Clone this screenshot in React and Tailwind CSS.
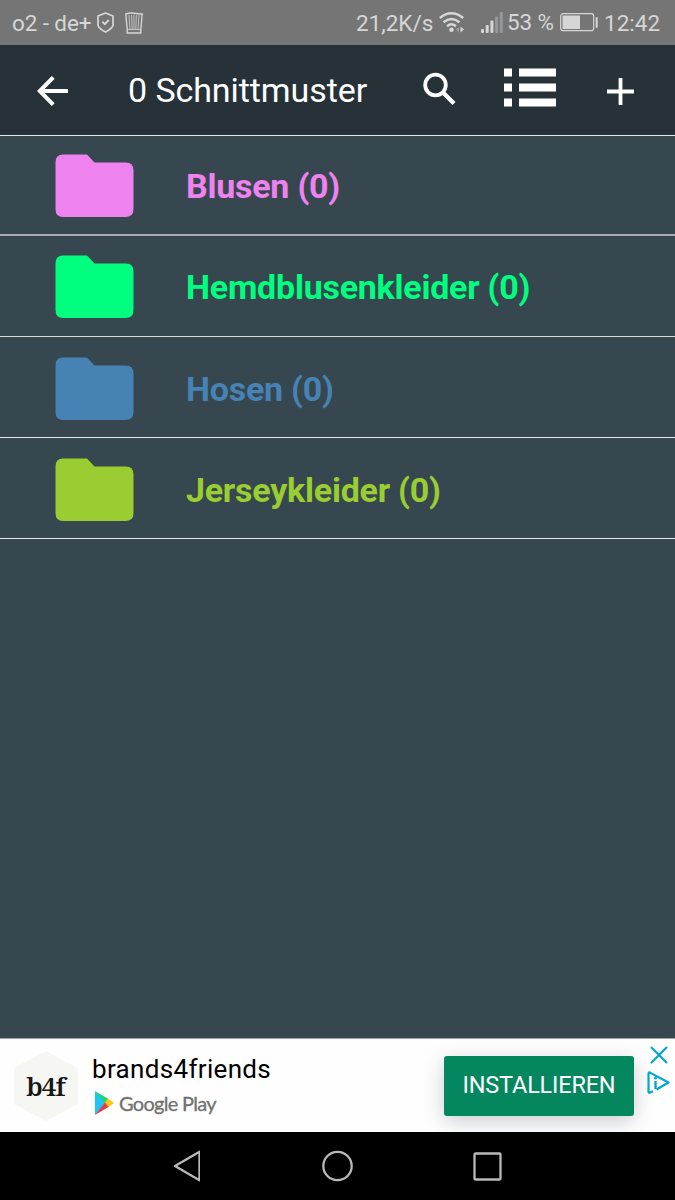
import React from "react";

const folders = [
  { name: "Blusen", count: 0, text: "text-[#ee82ee]", row: "h-[100px] border-b-2 border-[#a9adb5] pt-[2px]" },
  { name: "Hemdblusenkleider", count: 0, text: "text-[#00ff7f]", row: "h-[101px] border-b border-[#d8d8d8] pt-[2px]" },
  { name: "Hosen", count: 0, text: "text-[#4682b4]", row: "h-[101px] border-b border-[#e2e4e6] pt-[3px]" },
  { name: "Jerseykleider", count: 0, text: "text-[#9acd32]", row: "h-[101px] border-b border-[#e2e4e6] pt-[4px]" },
];

const StatusBar = () => (
  <div className="flex h-[45px] shrink-0 items-center bg-[#757575] pl-3 text-[22.5px] leading-none text-[#d6d6d6]">
    <span className="w-[85px] whitespace-nowrap pt-[2px] tracking-[-0.1px]">o2 - de+</span>
    <svg className="h-[21px] w-[17px]" viewBox="0 0 17 21" fill="none" stroke="currentColor" strokeWidth="1.700">
      <path d="M8.500 1 16 4V13.500Q15 16.500 8.500 20Q2 16.500 1 13.500V4Z" strokeLinejoin="round" />
      <path d="m5.300 9.800 2.500 2.400 3.900-4.200" strokeWidth="1.900" />
    </svg>
    <svg className="ml-[11px] h-[22px] w-[18px]" viewBox="0 0 18 22" fill="none" stroke="currentColor" strokeWidth="1.400">
      <path d="M.8 2Q5 .5 9 1.200T17.200 2L15.800 17.500V21H2.200V17.500Z" />
      <path d="M2.200 17.500H15.800M4 3l1 14M6.600 3l.6 14M9 3v14M11.400 3l-.6 14M14 3l-1 14" strokeWidth=".8" />
    </svg>
    <span className="ml-[213px] w-[83px] whitespace-nowrap pt-[2px]">21,2K/s</span>
    <svg className="h-[21px] w-[26px]" viewBox="0 0 26 21" fill="none" stroke="currentColor" strokeWidth="2.400">
      <path d="M.8 6Q12.500-3.500 24.200 6M4.500 10.300q8-6.600 16 0M8 14.200q4.500-3.700 9 0" />
      <circle cx="12.500" cy="17.800" r="2.300" fill="currentColor" stroke="none" />
      <path d="m20 15 0 5-3-2.500Z" fill="#a0a0a0" stroke="none" />
      <path d="m21.500 14.500 0 6 3.500-3Z" fill="currentColor" stroke="none" />
    </svg>
    <svg className="ml-[16px] h-[21px] w-[22px]" viewBox="0 0 22 21" fill="currentColor">
      <rect x="0" y="17" width="3" height="4" rx="1" />
      <rect x="4.700" y="13" width="3" height="8" rx="1" />
      <rect x="9.400" y="8.500" width="3" height="12.500" rx="1" />
      <rect x="14.100" y="4.500" width="3" height="16.500" rx="1" fill="#989898" />
      <rect x="18.800" y="0" width="3" height="21" rx="1" fill="#989898" />
    </svg>
    <span className="ml-1 w-[53px] whitespace-nowrap pb-[1px] tracking-[-0.1px]">53 %</span>
    <svg className="h-[19px] w-[38px]" viewBox="0 0 38 19" fill="none" stroke="currentColor">
      <rect x=".7" y=".7" width="33" height="17" rx="2.500" strokeWidth="1.200" />
      <rect x="2.500" y="2.500" width="17.500" height="13.500" fill="currentColor" stroke="none" />
      <path d="M36.700 5v9" strokeWidth="2" strokeLinecap="round" />
    </svg>
    <span className="ml-[6px] whitespace-nowrap pt-[2px]">12:42</span>
  </div>
);

const Header = () => (
  <header className="flex h-[91px] shrink-0 items-center border-b border-[#e2e4e6] bg-[#263238] pl-[37px] text-white">
    <svg className="mt-[2px] h-[32px] w-[32px]" viewBox="0 0 32 32" fill="none" stroke="currentColor" strokeWidth="4">
      <path d="M31 16H3M16.200 2.300 2.800 16 16.200 29.700" />
    </svg>
    <h1 className="ml-[59px] w-[295px] whitespace-nowrap text-[34px] leading-none tracking-[-0.08px]">0 Schnittmuster</h1>
    <svg className="mb-[2px] h-[34px] w-[34px]" viewBox="0 0 34 34" fill="none" stroke="currentColor">
      <circle cx="12.500" cy="13" r="10.300" strokeWidth="3.800" />
      <path d="m20.500 21 10.500 10.500" strokeWidth="4.300" />
    </svg>
    <svg className="mb-[6px] ml-[47px] h-[39px] w-[52px]" viewBox="0 0 52 39" fill="currentColor">
      <path d="M0 .5h8v8H0zM15 .5h37v8H15zM0 15.500h8v8H0zM15 15.500h37v8H15zM0 30.500h8v8H0zM15 30.500h37v8H15z" />
    </svg>
    <svg className="ml-[51px] mt-[2px] h-[27px] w-[27px]" viewBox="0 0 27 27" fill="none" stroke="currentColor" strokeWidth="3.800">
      <path d="M0 13.500h27M13.500 0v27" />
    </svg>
  </header>
);

const FolderRow = ({ folder }) => (
  <li className={`flex items-center pl-[55px] ${folder.row} ${folder.text}`}>
    <svg className="h-[64px] w-[79px]" viewBox="0 0 79 64" fill="currentColor">
      <path d="M8 .5H32l7.500 8H71q7.500 0 7.500 8V55q0 8-8 8H8q-7.500 0-7.500-8V8.500Q.5.5 8 .5Z" />
    </svg>
    <span className="ml-[52px] whitespace-nowrap text-[34px] font-bold leading-none tracking-[-0.24px]">
      {folder.name} ({folder.count})
    </span>
  </li>
);

const AdBanner = () => (
  <div className="flex h-[94px] shrink-0 items-center overflow-hidden border-t border-[#9ba4a8] bg-[#fefefe] pl-[13px]">
    <div className="grid h-[70px] w-[66px] place-items-center">
      <svg className="col-start-1 row-start-1 h-[70px] w-[66px]" viewBox="0 0 66 70">
        <path d="M33 0 65 17V53L33 70 1 53V17Z" fill="#f6f6f3" />
      </svg>
      <span className="col-start-1 row-start-1 pr-[1px] font-['Noto_Serif','DejaVu_Serif'] text-[26px] font-semibold leading-none tracking-[-0.9px] text-[#171717]">
        b4f
      </span>
    </div>
    <div className="ml-[13px] w-[352px]">
      <p className="text-[26px] leading-[32px] tracking-[0.33px] text-black">brands4friends</p>
      <div className="mb-[2px] mt-[4px] flex items-center pl-[3px]">
        <svg className="h-[24px] w-[19px]" viewBox="0 0 19 24">
          <path d="M0 0v24L11 12Z" fill="#1fc4f4" />
          <path d="M0 0 13.500 8 10 12.500Z" fill="#20d477" />
          <path d="M13 7.500 19 12l-6 4.500L9.500 12Z" fill="#ffc715" />
          <path d="M0 24 13.500 16 10 11.500Z" fill="#ee3848" />
        </svg>
        <span className="ml-[5px] font-['Lato'] text-[20px] leading-[28px] tracking-[-0.7px] text-[#707070] [-webkit-text-stroke:0.3px_#707070]">
          Google Play
        </span>
      </div>
    </div>
    <button className="h-[60px] w-[190px] rounded-[3px] bg-[#04875f] text-[23.5px] tracking-[-0.2px] text-white shadow-[0_5px_20px_rgba(50,60,90,0.25)]">
      INSTALLIEREN
    </button>
    <div className="ml-[13px] flex flex-col items-center gap-[7px] self-start bg-white pt-[7px]">
      <svg className="h-[18px] w-[18px]" viewBox="0 0 18 18" fill="none" stroke="#00a8cf" strokeWidth="2.200">
        <path d="m1 1 16 16M17 1 1 17" />
      </svg>
      <svg className="h-[23px] w-[23px]" viewBox="0 0 23 23" fill="none" stroke="#00a8cf" strokeWidth="2.200">
        <path d="M6 20.200 3 21.600Q1.500 22 1.500 20.500V2.500Q1.500 1 3 1.600L21.500 11.500 9.500 18.500" strokeLinejoin="round" />
        <path d="M8.500 10v8" strokeWidth="2.400" />
        <circle cx="8.500" cy="7.200" r="1.400" fill="#00a8cf" stroke="none" />
      </svg>
    </div>
  </div>
);

const NavBar = () => (
  <nav className="flex h-[68px] shrink-0 items-center bg-black pl-[173px] text-[#b9b9b9]">
    <svg className="h-[32px] w-[27px]" viewBox="0 0 27 32" fill="none" stroke="currentColor" strokeWidth="2.300" strokeLinejoin="round">
      <path d="M26.500 1.700V30.300L2 16Z" />
    </svg>
    <svg className="ml-[122px] h-[32px] w-[31px]" viewBox="0 0 31 32" fill="none" stroke="currentColor" strokeWidth="2.300">
      <circle cx="15.500" cy="16" r="14.200" />
    </svg>
    <svg className="ml-[120px] h-[29px] w-[29px]" viewBox="0 0 29 29" fill="none" stroke="currentColor" strokeWidth="2.300">
      <rect x="1.500" y="1.500" width="26" height="26" rx="1" />
    </svg>
  </nav>
);

const App = () => {
  return (
    <div className="flex h-[1200px] w-[675px] flex-col overflow-hidden bg-[#37474f] font-['Roboto',sans-serif]">
      <StatusBar />
      <Header />
      <ul className="grow">
        {folders.map((folder) => (
          <FolderRow key={folder.name} folder={folder} />
        ))}
      </ul>
      <AdBanner />
      <NavBar />
    </div>
  );
};

export default App;
